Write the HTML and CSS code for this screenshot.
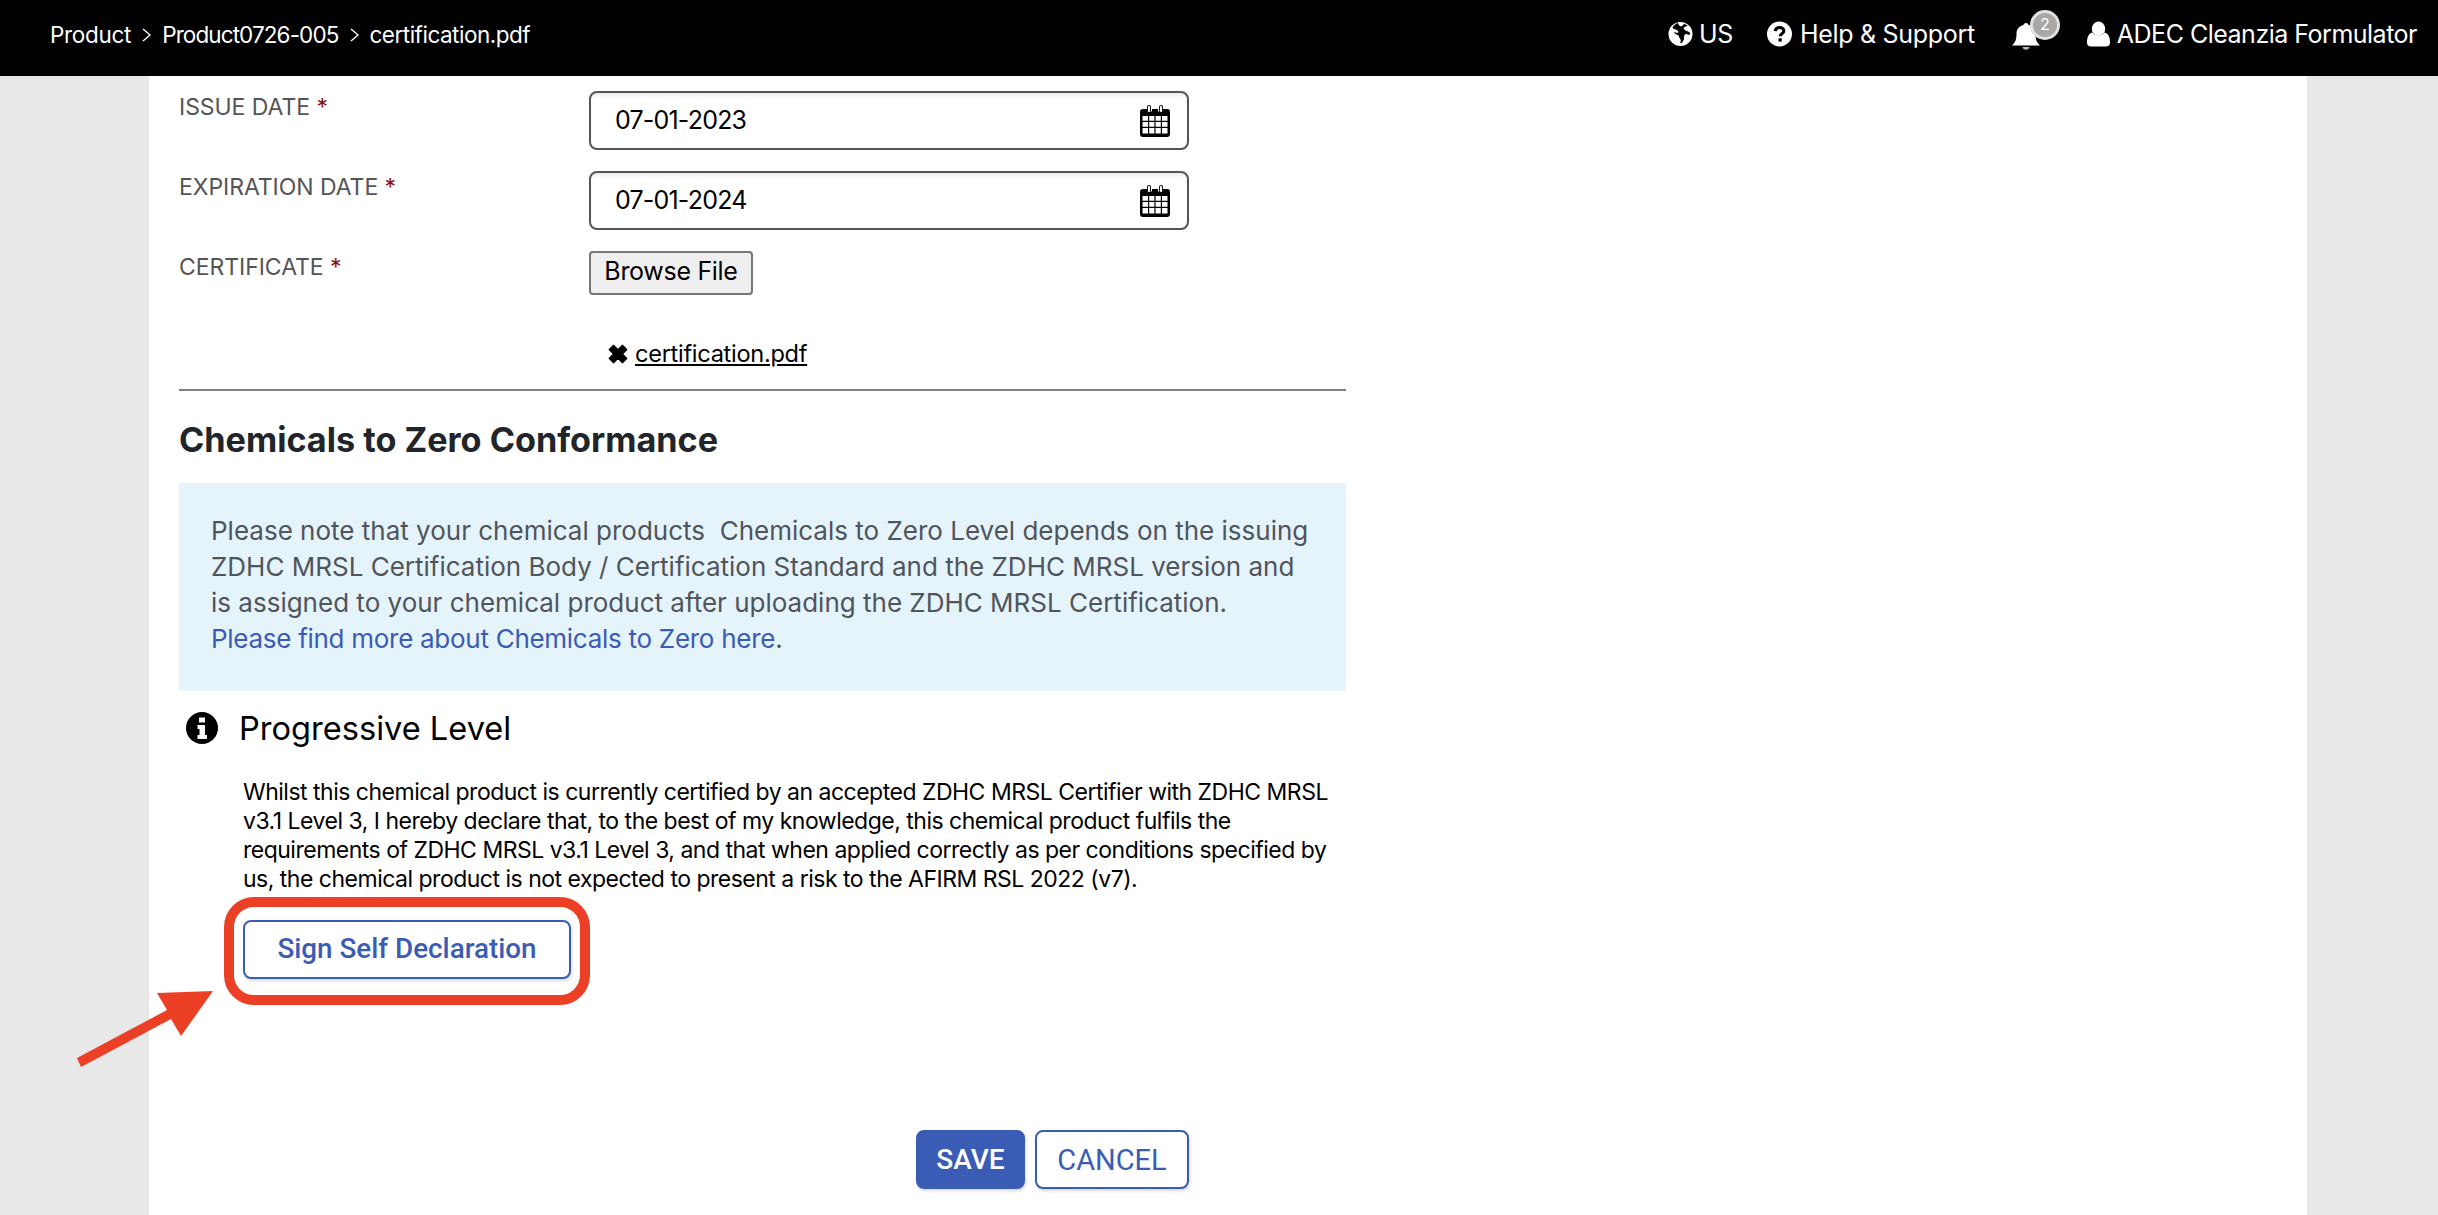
FILE: index.html
```html
<!DOCTYPE html>
<html lang="en">
<head>
<meta charset="utf-8">
<title>Certification</title>
<link rel="stylesheet" href="styles.css">
</head>
<body>
<header class="topbar">
  <nav class="crumbs">
    <span>Product</span>
    <svg class="chev" viewBox="0 0 9 14"><path d="M1 1l7 6-7 6" /></svg>
    <span class="crumb-code">Product0726-005</span>
    <svg class="chev" viewBox="0 0 9 14"><path d="M1 1l7 6-7 6" /></svg>
    <span class="crumb-file">certification.pdf</span>
  </nav>
  <div class="tools">
    <span class="tool tool-us">
      <svg class="ticon" viewBox="0 0 26 26"><circle cx="13" cy="13" r="12.5" fill="#fff"/><path d="M10 1.500c1.500 1.500 1 3 3 3.500s2-2 4.500-2.500l3 2c-1.500 1-3 .5-4 2s1.500 2.500 3 3.500 3.500 1 3.800 3l-2.300 1c-1.500-1.500-3-1-4 .5s.5 3-.5 4.500-1.500 3-3 4l-.8-1c1.200-1.500.5-3-.5-4.500s-.5-3-2-3.500-3.500-1-4-3.500c1.500 1 3.500 2 4.500 1s-1.500-3-3.500-3.500S4.500 7.500 5 5.500c1-1.500 3-3 5-4z" fill="#000"/></svg>
      <span>US</span>
    </span>
    <span class="tool tool-help">
      <svg class="ticon" viewBox="0 0 26 26"><circle cx="13" cy="13" r="13" fill="#fff"/><path d="M8.600 10c.3-2.400 2-3.700 4.500-3.700s4.400 1.400 4.400 3.500c0 3-3.700 3-3.700 5.600" fill="none" stroke="#000" stroke-width="3.200"/><rect x="12" y="17.500" width="3.400" height="3.400" fill="#000"/></svg>
      <span>Help &amp; Support</span>
    </span>
    <span class="bell-wrap">
      <svg class="bell" viewBox="0 0 28 30"><path d="M14 0c1.500 0 2.500 1 2.500 2 4.500 1 7 4.500 7 8.500 0 6 1 8.500 4.500 12H0c3.500-3.500 4.500-6 4.500-12C4.500 6.500 7 3 11.500 2c0-1 1-2 2.500-2z" fill="#fff"/><path d="M10.500 24a3.600 3.600 0 0 0 7 0z" fill="#bbb"/></svg>
      <span class="badge">2</span>
    </span>
    <span class="tool tool-user">
      <svg class="ticon ticon-user" viewBox="0 0 24 26"><ellipse cx="12" cy="7.500" rx="7" ry="7.500" fill="#fff"/><path d="M0 22c0-6 2-9.500 5.500-10.500C7 13.500 9.500 14.500 12 14.500s5-1 6.500-3C22 12.500 24 16 24 22c0 2.500-1.500 4-4 4H4c-2.500 0-4-1.500-4-4z" fill="#fff"/></svg>
      <span class="user-name">ADEC Cleanzia Formulator</span>
    </span>
  </div>
</header>

<main class="sheet">
  <div class="form">
    <div class="row row-date">
      <label class="lbl">ISSUE DATE <i>*</i></label>
      <div class="datebox"><span>07-01-2023</span>
        <svg class="cal" viewBox="0 0 30 32"><use href="#calendar"/></svg>
      </div>
    </div>
    <div class="row row-date">
      <label class="lbl">EXPIRATION DATE <i>*</i></label>
      <div class="datebox"><span>07-01-2024</span>
        <svg class="cal" viewBox="0 0 30 32"><use href="#calendar"/></svg>
      </div>
    </div>
    <div class="row row-file">
      <label class="lbl">CERTIFICATE <i>*</i></label>
      <div class="filecol">
        <button class="browse">Browse File</button>
        <div class="filename">
          <svg class="xmark" viewBox="0 0 18 18"><path d="M5 1l4 4 4-4 4 4-4 4 4 4-4 4-4-4-4 4-4-4 4-4-4-4z" fill="#000" stroke="#000" stroke-linejoin="round"/></svg>
          <a href="#">certification.pdf</a>
        </div>
      </div>
    </div>
    <hr class="rule">
    <h2 class="title">Chemicals to Zero Conformance</h2>
    <div class="note">Please note that your chemical products&nbsp; Chemicals to Zero Level depends on the issuing ZDHC MRSL Certification Body / Certification Standard and the ZDHC MRSL version and is assigned to your chemical product after uploading the ZDHC MRSL Certification.<br><a href="#">Please find more about Chemicals to Zero here</a>.</div>
    <div class="level">
      <svg class="info" viewBox="0 0 32 32"><circle cx="16" cy="16" r="16" fill="#000"/><path d="M13 5.500h6v5h-6zM11.500 13h7.500v10h2v4H11.500v-4h2v-6h-2z" fill="#fff"/></svg>
      <span>Progressive Level</span>
    </div>
    <p class="decl">Whilst this chemical product is currently certified by an accepted ZDHC MRSL Certifier with ZDHC MRSL v3.1 Level 3, I hereby declare that, to the best of my knowledge, this chemical product fulfils the requirements of ZDHC MRSL v3.1 Level 3, and that when applied correctly as per conditions specified by us, the chemical product is not expected to present a risk to the AFIRM RSL 2022 (v7).</p>
    <button class="sign">Sign Self Declaration</button>
    <div class="actions">
      <button class="btn btn-save">SAVE</button>
      <button class="btn btn-cancel">CANCEL</button>
    </div>
  </div>
</main>

<div class="callout"></div>
<svg class="arrow" viewBox="0 0 2438 1215"><polygon points="77,1058 81,1067 171,1019 181,1036 213,991 157,993 167,1010" fill="#ec4026"/></svg>

<svg class="defs" width="0" height="0">
  <symbol id="calendar" viewBox="0 0 30 32">
    <path d="M3 4h4v2.500h5V4h6v2.500h5V4h4a3 3 0 0 1 3 3v22a3 3 0 0 1-3 3H3a3 3 0 0 1-3-3V7a3 3 0 0 1 3-3z" fill="#000"/>
    <rect x="7" y="0" width="4" height="8" rx="2" fill="#000"/><rect x="7.900" y="1" width="2.200" height="6" rx="1" fill="#fff"/>
    <rect x="19" y="0" width="4" height="8" rx="2" fill="#000"/><rect x="19.900" y="1" width="2.200" height="6" rx="1" fill="#fff"/>
    <path d="M2.500 11h5.500v4.800H2.500zM9.200 11h5.200v4.800H9.200zM15.600 11h5.200v4.800h-5.200zM22 11h5.500v4.800H22zM2.500 17h5.500v4.800H2.500zM9.200 17h5.200v4.800H9.200zM15.600 17h5.200v4.800h-5.200zM22 17h5.500v4.800H22zM2.500 23h5.500v5.500H2.500zM9.200 23h5.200v5.500H9.200zM15.600 23h5.200v5.500h-5.200zM22 23h5.500v5.500H22z" fill="#fff"/>
  </symbol>
</svg>
</body>
</html>
```
FILE: styles.css
```css
* { box-sizing: border-box; }
html, body { margin: 0; height: 1215px; overflow: hidden; }
body {
  background: #e8e8e8;
  font-family: Inter, "Liberation Sans", sans-serif;
  color: #000;
  position: relative;
}
.topbar {
  height: 76px;
  background: #000;
  color: #fff;
  display: flex;
  align-items: center;
  justify-content: space-between;
  padding: 0 21px 8px 50px;
  font-size: 25px;
  letter-spacing: -0.3px;
}
.crumbs { display: flex; align-items: center; gap: 11px; font-size: 22.5px; }
.crumb-code { letter-spacing: -0.9px; }
.crumb-file { letter-spacing: -0.5px; }
.chev { width: 9px; height: 14px; margin-top: 2px; }
.chev path { fill: none; stroke: #fff; stroke-width: 1.4; }
.tools { display: flex; align-items: center; }
.tool { display: inline-flex; align-items: center; gap: 8px; }
.tool-us { gap: 6px; }
.ticon { width: 25px; height: 26px; }
.tool-help { margin-left: 34px; }
.bell-wrap { position: relative; width: 48px; height: 50px; margin-left: 37px; }
.bell { position: absolute; left: 0; top: 14px; width: 28px; height: 30px; }
.badge {
  position: absolute; left: 18px; top: 1px;
  width: 30px; height: 30px;
  border-radius: 50%;
  background: #a8a8a8;
  border: 3px solid #e0e0e0;
  color: #fff;
  font-size: 16px;
  line-height: 23px;
  text-align: center;
}
.tool-user { margin-left: 27px; gap: 7px; }
.ticon-user { width: 23px; }
.user-name { letter-spacing: -0.5px; }

.sheet { height: 1139px; margin: 0 131px 0 149px; background: #fff; padding: 0 30px; overflow: hidden; }
.form { width: 1167px; }
.row { display: grid; grid-template-columns: 410px 600px; }
.row-date { height: 60px; margin-top: 15px; }
.row-date + .row-date { margin-top: 20px; }
.row-file { margin-top: 20px; }
.lbl { font-size: 23px; color: #555; letter-spacing: -0.05px; padding-top: 1px; line-height: 30px; }
.lbl i { color: #8a1010; font-style: normal; }
.datebox {
  display: flex; align-items: center; justify-content: space-between;
  height: 59px;
  border: 2px solid #555;
  border-radius: 8px;
  padding: 0 17px 2px 24px;
  font-size: 25px;
  letter-spacing: -0.8px;
  box-shadow: inset 0 4px 5px -3px rgba(0,0,0,.12);
}
.cal { width: 30px; height: 32px; margin-top: 2px; }
.browse {
  display: block;
  width: 164px; height: 44px;
  background: #efefef;
  border: 2px solid #767676;
  border-radius: 4px;
  font: 25px Inter, sans-serif;
  letter-spacing: -0.3px;
  padding: 0 0 5px;
  color: #000;
}
.filecol { height: 138px; }
.filename { display: flex; align-items: center; gap: 7px; margin: 44px 0 0 19px; font-size: 23.6px; letter-spacing: -0.3px; }
.filename a { color: #000; }
.xmark { width: 20px; height: 20px; }
.rule { margin: 0; border: 0; border-top: 2px solid #808080; }
.title { margin: 28px 0 0; font-size: 34.2px; line-height: 42px; font-weight: 700; color: #212529; }
.note {
  margin-top: 22px;
  height: 208px;
  background: #e5f3fb;
  padding: 30px 31px 0 32px;
  font-size: 26px;
  line-height: 36px;
  color: #50555c;
}
.note a { color: #3a5cb5; text-decoration: none; letter-spacing: -0.28px; }
.level { display: flex; align-items: center; gap: 21px; margin: 17px 0 0 7px; height: 40px; font-size: 32.6px; }
.info { width: 32px; height: 32px; }
.decl { margin: 30px 0 0 64px; width: 1100px; font-size: 23px; line-height: 29px; letter-spacing: -0.5px; }
.sign {
  display: block;
  margin: 26px 0 0 64px;
  width: 328px; height: 59px;
  background: #fff;
  border: 2px solid #3a5cb5;
  border-radius: 8px;
  color: #3a5cb5;
  font: 500 27.8px Roboto, sans-serif;
  padding: 0 0 3px;
  box-shadow: 1px 2px 3px rgba(0,0,0,.15);
}
.actions { display: flex; justify-content: flex-end; gap: 10px; margin-top: 151px; width: 1010px; }
.btn {
  height: 59px;
  border-radius: 8px;
  font: 500 28px Roboto, sans-serif;
  border: 2px solid #3a5cb5;
  box-shadow: 1px 2px 3px rgba(0,0,0,.15);
}
.btn-save { width: 109px; background: #3a5cb5; color: #fff; }
.btn-cancel { width: 154px; background: #fff; color: #3a5cb5; font-weight: 400; font-size: 29px; }
.callout {
  position: absolute;
  left: 224px; top: 897px;
  width: 366px; height: 108px;
  border: 10px solid #ec4026;
  border-radius: 30px;
}
.arrow { position: absolute; left: 0; top: 0; width: 2438px; height: 1215px; pointer-events: none; }
.defs { position: absolute; }
```
